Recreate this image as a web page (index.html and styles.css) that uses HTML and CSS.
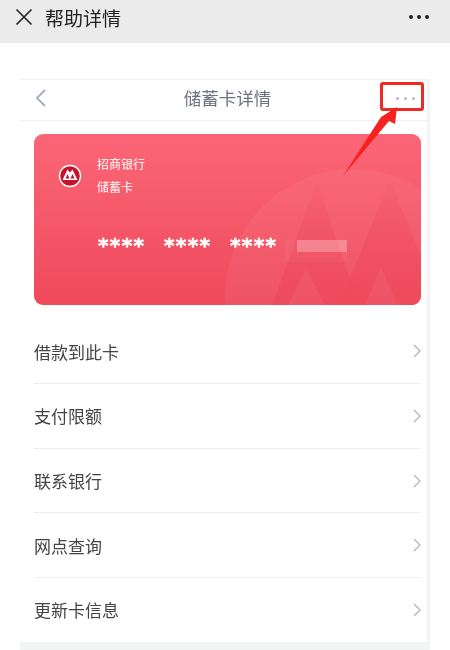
FILE: index.html
```html
<!DOCTYPE html>
<html lang="zh">
<head>
<meta charset="utf-8">
<title>帮助详情</title>
<link rel="stylesheet" href="styles.css">
</head>
<body>
<header class="topbar">
  <svg class="close" width="18" height="18" viewBox="0 0 18 18"><path d="M1.500 1.500L16.500 16.500M16.500 1.500L1.500 16.500" stroke="#222" stroke-width="1.600" fill="none"/></svg>
  <h1 class="topbar-title">帮助详情</h1>
  <div class="topbar-more"><i></i><i></i><i></i></div>
</header>
<main class="shot">
  <div class="nav">
    <svg class="back" width="13" height="20" viewBox="0 0 13 20"><path d="M11 2L3 10L11 18" stroke="#a9afbb" stroke-width="1.900" fill="none"/></svg>
    <div class="nav-title">储蓄卡详情</div>
    <div class="nav-more"><i></i><i></i><i></i></div>
  </div>
  <section class="card">
    <svg class="card-art" width="387" height="171" viewBox="0 0 387 171">
      <defs>
        <linearGradient id="fade" x1="0" y1="0" x2="0" y2="1">
          <stop offset="0" stop-color="#ee4a5c" stop-opacity=".08"/>
          <stop offset="1" stop-color="#ee4a5c" stop-opacity=".9"/>
        </linearGradient>
      </defs>
      <circle cx="319" cy="163" r="128" fill="#fff" opacity=".05"/>
      <path d="M283 48L238 171H325Z" fill="url(#fade)"/>
      <path d="M356 46L305 171H387V122Z" fill="url(#fade)"/>
      <path d="M272 134L254 171H291Z" fill="#fff" opacity=".05"/>
      <path d="M347 134L331 171H364Z" fill="#fff" opacity=".05"/>
      <rect x="251" y="106" width="62" height="22" fill="#fff" opacity=".04"/>
      <rect x="263" y="106" width="50" height="12" fill="#fff" opacity=".26"/>
    </svg>
    <div class="card-head">
      <svg class="logo" width="24" height="24" viewBox="0 0 24 24">
        <circle cx="12" cy="12" r="11.200" fill="#fff"/>
        <circle cx="12" cy="12" r="9.800" fill="#c4122b"/>
        <path d="M4.500 16L9.500 5.500L12 8.500L14.500 5.500L19.500 16Z" fill="#fff"/>
        <path d="M9.500 10L7.500 14.500H11.500Z" fill="#c4122b"/>
        <path d="M14.500 10L12.500 14.500H16.500Z" fill="#c4122b"/>
      </svg>
      <div class="card-names">
        <div>招商银行</div>
        <div>储蓄卡</div>
      </div>
    </div>
    <div class="card-number">
      <span>****</span><span>****</span><span>****</span>
    </div>
  </section>
  <ul class="rows">
    <li class="row"><span>借款到此卡</span><svg class="chev" width="8" height="14" viewBox="0 0 8 14"><path d="M1 1L7 7L1 13" stroke="#b8bbbf" stroke-width="1.500" fill="none"/></svg></li>
    <li class="row"><span>支付限额</span><svg class="chev" width="8" height="14" viewBox="0 0 8 14"><path d="M1 1L7 7L1 13" stroke="#b8bbbf" stroke-width="1.500" fill="none"/></svg></li>
    <li class="row"><span>联系银行</span><svg class="chev" width="8" height="14" viewBox="0 0 8 14"><path d="M1 1L7 7L1 13" stroke="#b8bbbf" stroke-width="1.500" fill="none"/></svg></li>
    <li class="row"><span>网点查询</span><svg class="chev" width="8" height="14" viewBox="0 0 8 14"><path d="M1 1L7 7L1 13" stroke="#b8bbbf" stroke-width="1.500" fill="none"/></svg></li>
    <li class="row"><span>更新卡信息</span><svg class="chev" width="8" height="14" viewBox="0 0 8 14"><path d="M1 1L7 7L1 13" stroke="#b8bbbf" stroke-width="1.500" fill="none"/></svg></li>
  </ul>
  <div class="highlight"></div>
  <svg class="arrow" width="60" height="80" viewBox="0 0 60 80"><path d="M0 79L38 20L54 10L52 27L46 24Z" fill="#f5231f"/></svg>
</main>
</body>
</html>
```
FILE: styles.css
```css
* { box-sizing: border-box; }
html, body { margin: 0; padding: 0; }
body {
  width: 450px;
  height: 650px;
  overflow: hidden;
  background: #fff;
  font-family: "Noto Sans CJK SC", "Liberation Sans", sans-serif;
  filter: blur(0.45px);
}
.topbar {
  height: 43px;
  background: #ebebeb;
  display: flex;
  align-items: center;
  padding: 0 21px 9px 15px;
}
.close { flex: none; }
.topbar-title {
  margin: 0 0 0 12px;
  font-size: 19px;
  font-weight: 400;
  color: #222;
  flex: 1;
}
.topbar-more { display: flex; gap: 3.500px; }
.topbar-more i { width: 4.500px; height: 4.500px; border-radius: 50%; background: #222; }
.shot {
  position: relative;
  margin: 36px 20px 0;
  width: 410px;
  height: 571px;
  background: #fff;
  border-top: 1px solid #f0f0f0;
  border-right: 3px solid #f3f4f4;
  border-bottom: 8px solid #f3f5f5;
}
.nav {
  height: 41px;
  border-bottom: 1px solid #f0f0f0;
  display: flex;
  align-items: center;
  justify-content: center;
  padding: 0 0 6px 8px;
  position: relative;
}
.back { position: absolute; left: 14px; top: 8px; }
.nav-title { font-size: 17.500px; color: #6d7280; }
.nav-more { position: absolute; right: 12px; top: 17px; display: flex; gap: 5px; }
.nav-more i { width: 3px; height: 3px; border-radius: 50%; background: #b6b8bc; }
.card {
  position: relative;
  overflow: hidden;
  margin: 13px 6px 0 14px;
  height: 171px;
  border-radius: 9px;
  background: linear-gradient(#fb6676, #ee4a5b);
  color: #fff;
  padding: 18px 0 0 24px;
}
.card-art { position: absolute; left: 0; top: 0; }
.card-head { position: relative; display: flex; gap: 15px; }
.logo { margin-top: 12px; flex: none; }
.card-names { font-size: 12px; line-height: 23px; color: #ffe6e8; font-weight: 500; }
.card-names div { height: 23px; }
.card-number {
  position: relative;
  margin: 35px 0 0 40px;
  display: flex;
  gap: 18.500px;
  font: 700 20px/24px "DejaVu Sans", sans-serif;
  -webkit-text-stroke: 0.6px #fff;
}
.card-number span { width: 47.500px; letter-spacing: 1.400px; }
.rows { list-style: none; margin: 14px 6px 0 14px; padding: 0; }
.row {
  height: 64.700px;
  display: flex;
  align-items: center;
  justify-content: space-between;
  border-top: 1px solid #eeeeee;
  font-size: 17px;
  color: #444;
}
.row:first-child { border-top: 0; height: 64px; }
.highlight {
  position: absolute;
  left: 360px;
  top: 2px;
  width: 44px;
  height: 29px;
  border: 3px solid #ee2a26;
  border-radius: 3px;
}
.arrow { position: absolute; left: 323px; top: 17px; }
```
